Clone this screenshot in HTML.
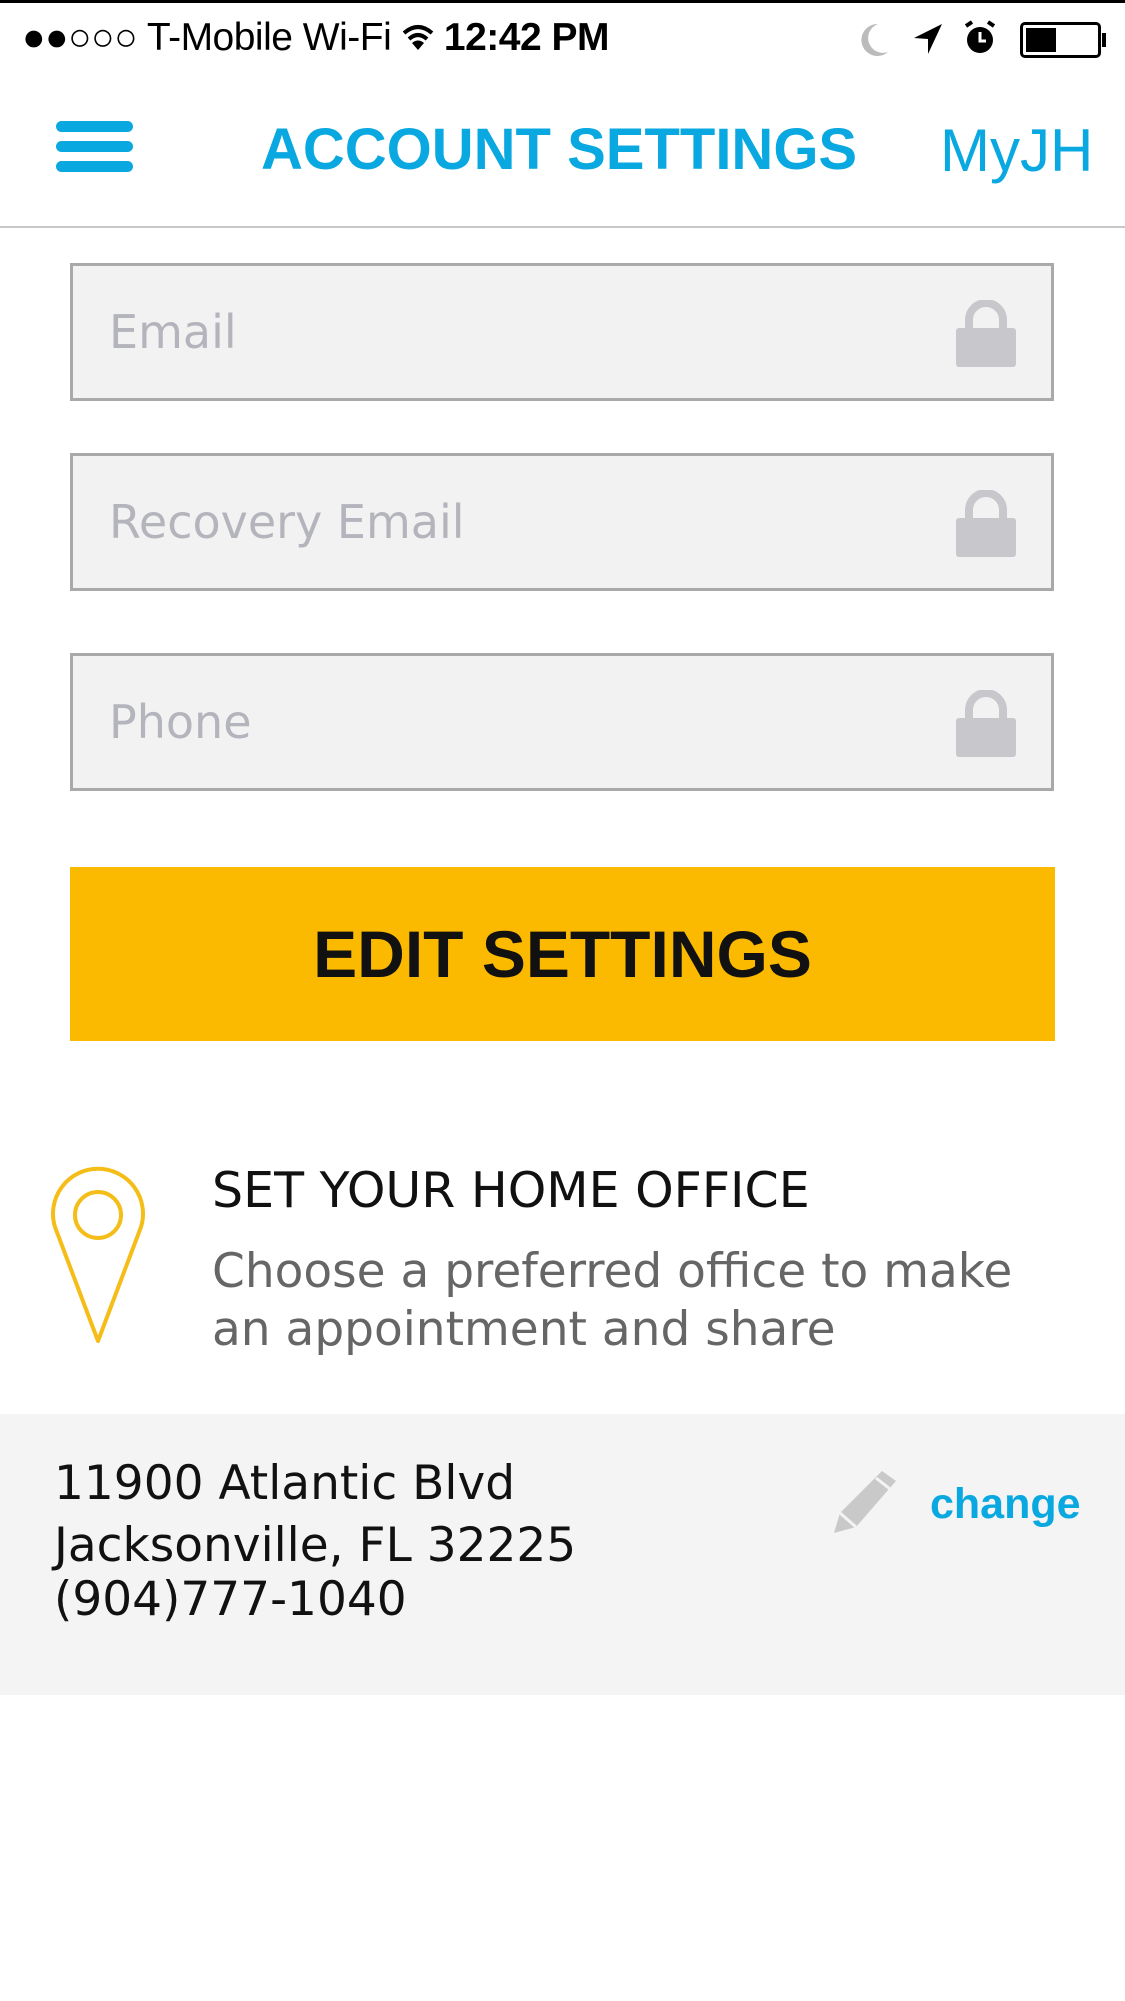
<!DOCTYPE html>
<html><head><meta charset="utf-8"><style>
*{margin:0;padding:0;box-sizing:border-box}
body{width:1125px;height:2001px;background:#fff;position:relative;overflow:hidden;font-family:"Liberation Sans",sans-serif}
.a{position:absolute;white-space:nowrap}
.field{position:absolute;left:70px;width:984px;height:138px;background:#f2f2f2;border:3px solid #a9a9a9}
.field span{position:absolute;left:36px;top:50%;transform:translateY(-50%);font-size:46px;color:#b4b4bc;font-family:"DejaVu Sans",sans-serif}
.lock{position:absolute;right:35px;top:34px}
.bar{position:absolute;left:56px;width:77px;height:11px;border-radius:6px;background:#0aa8e0}
</style></head><body>
<div class="a" style="left:0;top:0;width:1125px;height:3px;background:#000"></div>
<div class="a" style="left:22px;top:16px;font-size:39px;color:#000;letter-spacing:-0.5px">●●○○○ T-Mobile Wi-Fi <svg width="32" height="28" viewBox="0 0 32 28" style="vertical-align:-2px"><path d="M2 9 Q16 -3 30 9" stroke="#000" stroke-width="4" fill="none"/><path d="M7 15 Q16 7 25 15" stroke="#000" stroke-width="4" fill="none"/><path d="M16 26 L10 19 Q16 14 22 19Z" fill="#000"/></svg> <b>12:42 PM</b></div>
<svg class="a" style="left:858px;top:22px" width="32" height="36" viewBox="0 0 32 36"><path d="M20 2 A16 16 0 1 0 30 30 A13 13 0 0 1 20 2Z" fill="#bbb"/></svg>
<svg class="a" style="left:912px;top:22px" width="32" height="34" viewBox="0 0 32 34"><path d="M30 2 L2 16 L16 17 L16 32Z" fill="#000"/></svg>
<svg class="a" style="left:962px;top:20px" width="36" height="36" viewBox="0 0 36 36"><circle cx="18" cy="20" r="13" fill="#000"/><path d="M18 12 V21 H24" stroke="#fff" stroke-width="3" fill="none"/><path d="M4 6 L10 2 M32 6 L26 2" stroke="#000" stroke-width="4"/></svg>
<div class="a" style="left:1020px;top:22px;width:81px;height:36px;border:3px solid #000;border-radius:5px"><div style="position:absolute;left:3px;top:3px;width:30px;height:24px;background:#000"></div></div>
<div class="a" style="left:1102px;top:33px;width:4px;height:14px;background:#000"></div>
<div class="bar" style="top:121px"></div><div class="bar" style="top:141px"></div><div class="bar" style="top:161px"></div>
<div class="a" style="left:261px;top:116px;font-size:58px;color:#0aa8e0;font-weight:bold">ACCOUNT SETTINGS</div>
<div class="a" style="left:940px;top:116px;font-size:60px;color:#0aa8e0">MyJH</div>
<div class="a" style="left:0;top:226px;width:1125px;height:2px;background:#c8c8c8"></div>
<div class="field" style="top:263px"><span>Email</span><svg class="lock" width="60" height="67" viewBox="0 0 60 67"><path d="M13 28 V20 A17 17 0 0 1 47 20 V28" stroke="#c8c8cc" stroke-width="8" fill="none"/><rect x="0" y="28" width="60" height="39" rx="3" fill="#c8c8cc"/></svg></div>
<div class="field" style="top:453px"><span>Recovery Email</span><svg class="lock" width="60" height="67" viewBox="0 0 60 67"><path d="M13 28 V20 A17 17 0 0 1 47 20 V28" stroke="#c8c8cc" stroke-width="8" fill="none"/><rect x="0" y="28" width="60" height="39" rx="3" fill="#c8c8cc"/></svg></div>
<div class="field" style="top:653px"><span>Phone</span><svg class="lock" width="60" height="67" viewBox="0 0 60 67"><path d="M13 28 V20 A17 17 0 0 1 47 20 V28" stroke="#c8c8cc" stroke-width="8" fill="none"/><rect x="0" y="28" width="60" height="39" rx="3" fill="#c8c8cc"/></svg></div>
<div class="a" style="left:70px;top:867px;width:985px;height:174px;background:#fbb900;text-align:center;line-height:174px;font-size:66px;font-weight:bold;color:#111">EDIT SETTINGS</div>
<svg class="a" style="left:49px;top:1165px" width="98" height="180" viewBox="0 0 98 180"><path d="M49 176 L6 62 A45 45 0 1 1 92 62 Z" stroke="#f5bd18" stroke-width="4" fill="none" stroke-linejoin="round"/><circle cx="49" cy="50" r="23" stroke="#f5bd18" stroke-width="4" fill="none"/></svg>
<div class="a" style="left:212px;top:1162px;font-size:49px;color:#111;font-family:'DejaVu Sans',sans-serif">SET YOUR HOME OFFICE</div>
<div class="a" style="left:212px;top:1243px;font-size:47px;color:#666;line-height:58px;font-family:'DejaVu Sans',sans-serif">Choose a preferred office to make<br>an appointment and share</div>
<div class="a" style="left:0;top:1414px;width:1125px;height:281px;background:#f4f4f4"></div>
<div class="a" style="left:54px;top:1453px;font-size:47px;color:#111;line-height:62px;font-family:'DejaVu Sans',sans-serif">11900 Atlantic Blvd<br>Jacksonville, FL 32225<br><span style="position:relative;top:-8px">(904)777-1040</span></div>
<svg class="a" style="left:832px;top:1469px" width="66" height="66" viewBox="0 0 66 66"><path d="M50 2 L64 12 L24 58 L2 64 L8 44Z" fill="#c9c9c9"/><path d="M8 44 L24 58" stroke="#f4f4f4" stroke-width="3"/><path d="M44 9 L58 20" stroke="#f4f4f4" stroke-width="3"/></svg>
<div class="a" style="left:930px;top:1480px;font-size:43px;font-weight:bold;color:#0aa8e0">change</div>
</body></html>
